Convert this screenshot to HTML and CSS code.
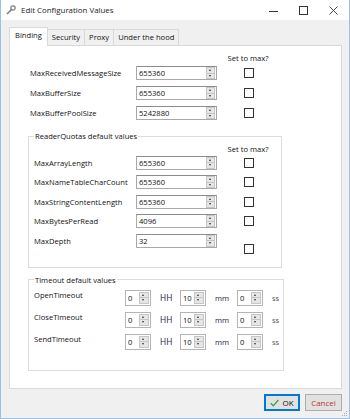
FILE: index.html
```html
<!DOCTYPE html>
<html>
<head>
    <meta charset="UTF-8">
    <title>Edit Configuration Values</title>
    <link rel="stylesheet" href="styles.css">
</head>
<body>
<div class="window">
    <div class="titlebar">
        <svg class="appicon" width="10" height="10" viewBox="0 0 10 10">
            <path d="M1 9 L6 4" stroke="#7d7d7d" stroke-width="1.6" fill="none"/>
            <circle cx="7" cy="3" r="2.2" fill="none" stroke="#7d7d7d" stroke-width="1.2"/>
        </svg>
        <span class="title">Edit Configuration Values</span>
        <div class="caption">
            <span class="capbtn"><svg width="9" height="9" viewBox="0 0 9 9"><path d="M0 5.5 H9" stroke="#333" stroke-width="1"/></svg></span>
            <span class="capbtn"><svg width="9" height="9" viewBox="0 0 9 9"><rect x="0.5" y="0.5" width="8" height="8" fill="none" stroke="#333" stroke-width="1"/></svg></span>
            <span class="capbtn"><svg width="9" height="9" viewBox="0 0 9 9"><path d="M0.5 0.5 L8.5 8.5 M8.5 0.5 L0.5 8.5" stroke="#333" stroke-width="0.9"/></svg></span>
        </div>
    </div>

    <div class="client">
        <div class="tabs">
            <div class="tab active">Binding</div>
            <div class="tab">Security</div>
            <div class="tab">Proxy</div>
            <div class="tab">Under the hood</div>
        </div>

        <div class="panel">
            <div class="section">
                <div class="maxhead">Set to max?</div>
                <div class="row">
                    <span class="lbl">MaxReceivedMessageSize</span>
                    <div class="num"><span class="val">655360</span><span class="spin"><i class="up"></i><i class="dn"></i></span></div>
                    <span class="check"></span>
                </div>
                <div class="row">
                    <span class="lbl">MaxBufferSize</span>
                    <div class="num"><span class="val">655360</span><span class="spin"><i class="up"></i><i class="dn"></i></span></div>
                    <span class="check"></span>
                </div>
                <div class="row">
                    <span class="lbl">MaxBufferPoolSize</span>
                    <div class="num"><span class="val">5242880</span><span class="spin"><i class="up"></i><i class="dn"></i></span></div>
                    <span class="check"></span>
                </div>
            </div>

            <fieldset class="group quotas">
                <legend>ReaderQuotas default values</legend>
                <div class="maxhead">Set to max?</div>
                <div class="row">
                    <span class="lbl">MaxArrayLength</span>
                    <div class="num"><span class="val">655360</span><span class="spin"><i class="up"></i><i class="dn"></i></span></div>
                    <span class="check"></span>
                </div>
                <div class="row">
                    <span class="lbl">MaxNameTableCharCount</span>
                    <div class="num"><span class="val">655360</span><span class="spin"><i class="up"></i><i class="dn"></i></span></div>
                    <span class="check"></span>
                </div>
                <div class="row">
                    <span class="lbl">MaxStringContentLength</span>
                    <div class="num"><span class="val">655360</span><span class="spin"><i class="up"></i><i class="dn"></i></span></div>
                    <span class="check"></span>
                </div>
                <div class="row">
                    <span class="lbl">MaxBytesPerRead</span>
                    <div class="num"><span class="val">4096</span><span class="spin"><i class="up"></i><i class="dn"></i></span></div>
                    <span class="check"></span>
                </div>
                <div class="row">
                    <span class="lbl">MaxDepth</span>
                    <div class="num"><span class="val">32</span><span class="spin"><i class="up"></i><i class="dn"></i></span></div>
                    <span class="check low"></span>
                </div>
            </fieldset>

            <fieldset class="group timeouts">
                <legend>Timeout default values</legend>
                <div class="trow">
                    <span class="tlbl">OpenTimeout</span>
                    <div class="tnum"><span class="val">0</span><span class="spin"><i class="up"></i><i class="dn"></i></span></div>
                    <span class="unit hh">HH</span>
                    <div class="tnum"><span class="val">10</span><span class="spin"><i class="up"></i><i class="dn"></i></span></div>
                    <span class="unit mm">mm</span>
                    <div class="tnum"><span class="val">0</span><span class="spin"><i class="up"></i><i class="dn"></i></span></div>
                    <span class="unit ss">ss</span>
                </div>
                <div class="trow">
                    <span class="tlbl">CloseTimeout</span>
                    <div class="tnum"><span class="val">0</span><span class="spin"><i class="up"></i><i class="dn"></i></span></div>
                    <span class="unit hh">HH</span>
                    <div class="tnum"><span class="val">10</span><span class="spin"><i class="up"></i><i class="dn"></i></span></div>
                    <span class="unit mm">mm</span>
                    <div class="tnum"><span class="val">0</span><span class="spin"><i class="up"></i><i class="dn"></i></span></div>
                    <span class="unit ss">ss</span>
                </div>
                <div class="trow">
                    <span class="tlbl">SendTimeout</span>
                    <div class="tnum"><span class="val">0</span><span class="spin"><i class="up"></i><i class="dn"></i></span></div>
                    <span class="unit hh">HH</span>
                    <div class="tnum"><span class="val">10</span><span class="spin"><i class="up"></i><i class="dn"></i></span></div>
                    <span class="unit mm">mm</span>
                    <div class="tnum"><span class="val">0</span><span class="spin"><i class="up"></i><i class="dn"></i></span></div>
                    <span class="unit ss">ss</span>
                </div>
            </fieldset>
        </div>

        <div class="buttons">
            <button class="btn ok">
                <svg width="9" height="8" viewBox="0 0 9 8"><path d="M0.8 4.2 L3.3 6.8 L8.3 1" stroke="#3aa244" stroke-width="1.3" fill="none"/></svg>
                OK
            </button>
            <button class="btn cancel">Cancel</button>
        </div>
        <svg class="grip" width="6" height="6" viewBox="0 0 6 6">
            <rect x="4" y="0" width="1" height="1" fill="#a8a8a8"/>
            <rect x="2" y="2" width="1" height="1" fill="#a8a8a8"/>
            <rect x="4" y="2" width="1" height="1" fill="#a8a8a8"/>
            <rect x="0" y="4" width="1" height="1" fill="#a8a8a8"/>
            <rect x="2" y="4" width="1" height="1" fill="#a8a8a8"/>
            <rect x="4" y="4" width="1" height="1" fill="#a8a8a8"/>
        </svg>
    </div>
</div>
</body>
</html>
```
FILE: styles.css
```css
* {
    box-sizing: border-box;
}

body {
    margin: 0;
    font-family: "Open Sans", "Noto Sans", sans-serif;
    font-size: 7.6px;
    color: #111;
}

.window {
    width: 350px;
    height: 419px;
    border: 1px solid #99c2ea;
    border-top: none;
    background: #f0f0f0;
    display: flex;
    flex-direction: column;
}

/* title bar */
.titlebar {
    height: 20px;
    background: #fff;
    display: flex;
    align-items: center;
}

.appicon {
    margin-left: 5px;
}

.title {
    margin-left: 5px;
    font-size: 7.9px;
    color: #222;
}

.caption {
    margin-left: auto;
    margin-right: 1px;
    display: flex;
}

.capbtn {
    width: 30px;
    height: 20px;
    display: flex;
    align-items: center;
    justify-content: center;
}

/* client area */
.client {
    flex: 1;
    padding: 7px 7px 0 8px;
    position: relative;
}

.tabs {
    display: flex;
    align-items: flex-end;
    height: 18px;
}

.tab {
    height: 16px;
    padding: 0 4px;
    line-height: 15px;
    border: 1px solid #d9d9d9;
    border-bottom: none;
    margin-left: -1px;
    background: #f0f0f0;
}

.tab.active {
    height: 19px;
    margin-bottom: -1px;
    margin-left: 0;
    padding: 0 5px;
    background: #fff;
    position: relative;
    z-index: 1;
}

.panel {
    width: 333px;
    height: 344px;
    background: #fff;
    border: 1px solid #d9d9d9;
}

/* rows with number inputs */
.section {
    padding: 6px 0 0 20px;
}

.maxhead {
    height: 12px;
    line-height: 12px;
    width: 60px;
    text-align: center;
    margin-left: 188px;
    margin-bottom: -1px;
}

.row {
    display: flex;
    align-items: center;
    height: 20px;
}

.lbl {
    width: 106px;
    flex: none;
}

.num {
    width: 81px;
    height: 14px;
    display: flex;
    border: 1px solid #a9a9a9;
    border-top-color: #8c8c8c;
    background: #fff;
}

.val {
    flex: 1;
    padding-left: 2px;
    line-height: 12px;
}

.spin {
    width: 9px;
    display: flex;
    flex-direction: column;
    margin: 0 1px 0 0;
}

.spin i {
    flex: 1;
    background: #e6e6e6;
    border: 1px solid #c6c6c6;
    position: relative;
}

.spin i.dn {
    border-top: none;
}

.spin i::after {
    content: "";
    position: absolute;
    left: 2px;
    border-left: 1.5px solid transparent;
    border-right: 1.5px solid transparent;
}

.spin i.up::after {
    top: 1px;
    border-bottom: 2px solid #333;
}

.spin i.dn::after {
    top: 1px;
    border-top: 2px solid #333;
}

.check {
    width: 10px;
    height: 10px;
    border: 1px solid #333;
    background: #fff;
    margin-left: 27px;
}

.check.low {
    margin-top: 16px;
}

/* group boxes */
.group {
    margin: 7px 0 0 18px;
    width: 254px;
    border: 1px solid #dcdcdc;
    padding: 0 0 0 5px;
}

.group legend {
    padding: 0 1px;
    line-height: 12px;
    height: 12px;
}

.quotas {
    padding-bottom: 16px;
}

.quotas .maxhead {
    margin-left: 184px;
    margin-top: 1px;
    margin-bottom: -2px;
}

.quotas .row {
    height: 19.5px;
}

.quotas .lbl {
    width: 102px;
}

.timeouts {
    margin-top: 6px;
    padding-top: 1px;
    height: 97px;
}

.trow {
    display: flex;
    align-items: center;
    height: 22px;
}

.tlbl {
    width: 91px;
    margin-bottom: 6px;
}

.tnum {
    width: 26px;
    height: 16px;
    display: flex;
    border: 1px solid #b4b4b4;
    background: #fff;
}

.tnum .val {
    line-height: 14px;
}

.tnum .spin {
    width: 10px;
    margin: 1px 1px 1px 0;
}

.unit {
    padding-left: 9px;
    color: #1c1c3c;
}

.hh {
    width: 29px;
    font-size: 8.4px;
}

.mm {
    width: 31px;
}

.ss {
    width: 20px;
    color: #555;
}

/* dialog buttons */
.buttons {
    display: flex;
    justify-content: flex-end;
    gap: 5px;
    margin-top: 5px;
}

.btn {
    font-family: inherit;
    font-size: 8px;
    height: 17px;
    padding: 0;
    background: #e1e1e1;
    border: 1px solid #adadad;
    display: flex;
    align-items: center;
    justify-content: center;
    gap: 3px;
}

.ok {
    width: 36px;
    border: 2px solid #0078d7;
    color: #111;
}

.cancel {
    width: 37px;
    color: #b53a32;
}

.grip {
    position: absolute;
    right: 1px;
    bottom: 1px;
}
```
